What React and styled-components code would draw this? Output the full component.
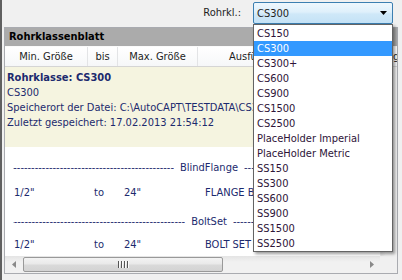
import React from 'react';
import styled, { createGlobalStyle } from 'styled-components';

const Global = createGlobalStyle`
  html, body { margin: 0; padding: 0; background: #f0f0f0; }
  body {
    font-family: "DejaVu Sans Condensed", "DejaVu Sans", "Liberation Sans", sans-serif;
    font-size: 11px;
  }
  * { box-sizing: border-box; }
`;

const Window = styled.div`
  width: 402px;
  height: 280px;
  display: flex;
  background: #f0f0f0;
  overflow: hidden;
`;

const EdgeStrip = styled.div`
  width: 2px;
  flex: none;
  background: #606060;
`;

const Main = styled.div`
  flex: 1;
  display: flex;
  flex-direction: column;
  padding: 0 4px 6px 2px;
  min-width: 0;
`;

const Toolbar = styled.div`
  height: 27px;
  flex: none;
  display: flex;
  justify-content: flex-end;
  align-items: flex-start;
  gap: 12px;
  padding: 2px 5px 0 0;
  position: relative;
  z-index: 5;
`;

const ToolLabel = styled.span`
  line-height: 22px;
  color: #1e1e1e;
`;

const ComboWrap = styled.div`
  position: relative;
  width: 140px;
  height: 22px;
`;

const ComboBox = styled.div`
  height: 22px;
  border: 1px solid #3c7fb1;
  border-radius: 2px;
  background: linear-gradient(#eef7fd 0%, #dff0fb 45%, #cfe8f8 55%, #c4e2f6 100%);
  display: flex;
  align-items: center;
  justify-content: space-between;
  padding: 0 5px 0 3px;
  color: #1e1e1e;
`;

const DropList = styled.div`
  position: absolute;
  left: 0;
  top: 100%;
  width: 140px;
  background: #fff;
  border: 1px solid #646464;
  padding-top: 1px;
  box-shadow: 2px 2px 3px rgba(0, 0, 0, 0.4);
`;

const DropItem = styled.div`
  height: 15px;
  line-height: 15px;
  padding-left: 3px;
  white-space: nowrap;
  color: ${(p) => (p.$active ? '#ffffff' : '#2e1438')};
  background: ${(p) => (p.$active ? '#3399ff' : 'transparent')};
`;

const Panel = styled.div`
  flex: 1;
  display: flex;
  flex-direction: column;
  border: 1px solid #a9abb0;
  background: #fff;
  min-height: 0;
`;

const PanelHeader = styled.div`
  height: 18px;
  flex: none;
  background: #ababab;
  font-weight: bold;
  color: #000;
  line-height: 18px;
  padding-left: 4px;
`;

const Body = styled.div`
  flex: 1;
  display: grid;
  grid-template-columns: 1fr 17px;
  grid-template-rows: 21px 1fr 17px;
  min-height: 0;
`;

const ColumnHeader = styled.div`
  grid-column: 1 / 3;
  display: flex;
  background: linear-gradient(#ffffff, #f6f7f9);
  border-top: 1px solid #fafafa;
  border-bottom: 1px solid #d5d5d5;
  overflow: hidden;
`;

const HeadCell = styled.div`
  width: ${(p) => p.$w}px;
  flex: none;
  text-align: center;
  line-height: 19px;
  color: #1e1e1e;
  border-right: 1px solid #e3e4e6;
  white-space: nowrap;
`;

const Content = styled.div`
  overflow: hidden;
  background: #fff;
`;

const InfoBlock = styled.div`
  background: #f5f4e0;
  padding: 3px 2px 17px 2px;
  color: #1c2a6e;
  line-height: 15px;
  white-space: nowrap;
`;

const InfoTitle = styled.div`
  font-weight: bold;
`;

const InfoLine = styled.div``;

const DashLine = styled.div`
  width: 392px;
  margin: ${(p) => p.$mt}px 0 0 8px;
  display: flex;
  align-items: center;
  gap: 6px;
  line-height: 15px;
  color: #1c2a6e;
  white-space: nowrap;
`;

const Dashes = styled.span`
  flex: 1;
  overflow: hidden;
  display: flex;
  justify-content: ${(p) => (p.$side === 'left' ? 'flex-end' : 'flex-start')};
`;

const DashLabel = styled.span`
  flex: none;
`;

const DataRow = styled.div`
  display: grid;
  grid-template-columns: 80px 30px 81px auto;
  margin: ${(p) => p.$mt}px 0 0 9px;
  line-height: 15px;
  color: #1c2a6e;
  white-space: nowrap;
`;

const VScroll = styled.div`
  background: linear-gradient(90deg, #e6e6e6, #f2f2f2 30%, #f2f2f2);
  border-left: 1px solid #ececec;
  display: flex;
  flex-direction: column;
`;

const HScroll = styled.div`
  display: flex;
  align-items: stretch;
  background: linear-gradient(#e4e4e4, #f1f1f1 35%, #f1f1f1);
`;

const ScrollButton = styled.div`
  width: 17px;
  height: 17px;
  flex: none;
  display: flex;
  align-items: center;
  justify-content: center;
`;

const Track = styled.div`
  flex: 1;
  display: flex;
  align-items: center;
  padding-left: 1px;
`;

const Thumb = styled.div`
  width: ${(p) => p.$w}px;
  height: 15px;
  border: 1px solid #999;
  border-radius: 2px;
  background: linear-gradient(#f3f3f3, #e9e9e9 45%, #d9d9d9 55%, #d3d3d3);
  display: flex;
  align-items: center;
  justify-content: center;
  gap: 1px;
`;

const Grip = styled.span`
  width: 1px;
  height: 7px;
  background: #555;
  box-shadow: 1px 0 0 #fafafa;
  margin-right: 1px;
`;

const Corner = styled.div`
  background: #f0f0f0;
`;

const items = [
  'CS150', 'CS300', 'CS300+', 'CS600', 'CS900', 'CS1500', 'CS2500',
  'PlaceHolder Imperial', 'PlaceHolder Metric', 'SS150', 'SS300', 'SS600',
  'SS900', 'SS1500', 'SS2500',
];

const DASHES = '-'.repeat(70);

const Arrow = ({ dir }) => {
  const pts = {
    down: '0,0 7,0 3.5,4',
    left: '4,0 4,7 0,3.5',
    right: '0,0 0,7 4,3.5',
  }[dir];
  const w = dir === 'down' ? 7 : 4;
  const h = dir === 'down' ? 4 : 7;
  return (
    <svg width={w} height={h} viewBox={`0 0 ${w} ${h}`}>
      <polygon points={pts} fill={dir === 'down' ? '#000' : '#8a8a8a'} />
    </svg>
  );
};

export default function App() {
  return (
    <>
      <Global />
      <Window>
        <EdgeStrip />
        <Main>
          <Toolbar>
            <ToolLabel>Rohrkl.:</ToolLabel>
            <ComboWrap>
              <ComboBox>
                <span>CS300</span>
                <Arrow dir="down" />
              </ComboBox>
              <DropList>
                {items.map((it) => (
                  <DropItem key={it} $active={it === 'CS300'}>{it}</DropItem>
                ))}
              </DropList>
            </ComboWrap>
          </Toolbar>
          <Panel>
            <PanelHeader>Rohrklassenblatt</PanelHeader>
            <Body>
              <ColumnHeader>
                <HeadCell $w={83}>Min. Größe</HeadCell>
                <HeadCell $w={30}>bis</HeadCell>
                <HeadCell $w={80}>Max. Größe</HeadCell>
                <HeadCell $w={120}>Ausführung</HeadCell>
                <HeadCell $w={100}>Bezeichnung</HeadCell>
              </ColumnHeader>
              <Content>
                <InfoBlock>
                  <InfoTitle>Rohrklasse: CS300</InfoTitle>
                  <InfoLine>CS300</InfoLine>
                  <InfoLine>Speicherort der Datei: C:\AutoCAPT\TESTDATA\CS300.xml</InfoLine>
                  <InfoLine>Zuletzt gespeichert: 17.02.2013 21:54:12</InfoLine>
                </InfoBlock>
                <DashLine $mt={13}>
                  <Dashes $side="left">{DASHES}</Dashes>
                  <DashLabel>BlindFlange</DashLabel>
                  <Dashes>{DASHES}</Dashes>
                </DashLine>
                <DataRow $mt={10}>
                  <span>1/2"</span>
                  <span>to</span>
                  <span>24"</span>
                  <span>FLANGE BLIND</span>
                </DataRow>
                <DashLine $mt={14}>
                  <Dashes $side="left">{DASHES}</Dashes>
                  <DashLabel>BoltSet</DashLabel>
                  <Dashes>{DASHES}</Dashes>
                </DashLine>
                <DataRow $mt={8}>
                  <span>1/2"</span>
                  <span>to</span>
                  <span>24"</span>
                  <span>BOLT SET</span>
                </DataRow>
              </Content>
              <VScroll />
              <HScroll>
                <ScrollButton><Arrow dir="left" /></ScrollButton>
                <Track>
                  <Thumb $w={200}>
                    <Grip /><Grip /><Grip /><Grip />
                  </Thumb>
                </Track>
                <ScrollButton><Arrow dir="right" /></ScrollButton>
              </HScroll>
              <Corner />
            </Body>
          </Panel>
        </Main>
      </Window>
    </>
  );
}
